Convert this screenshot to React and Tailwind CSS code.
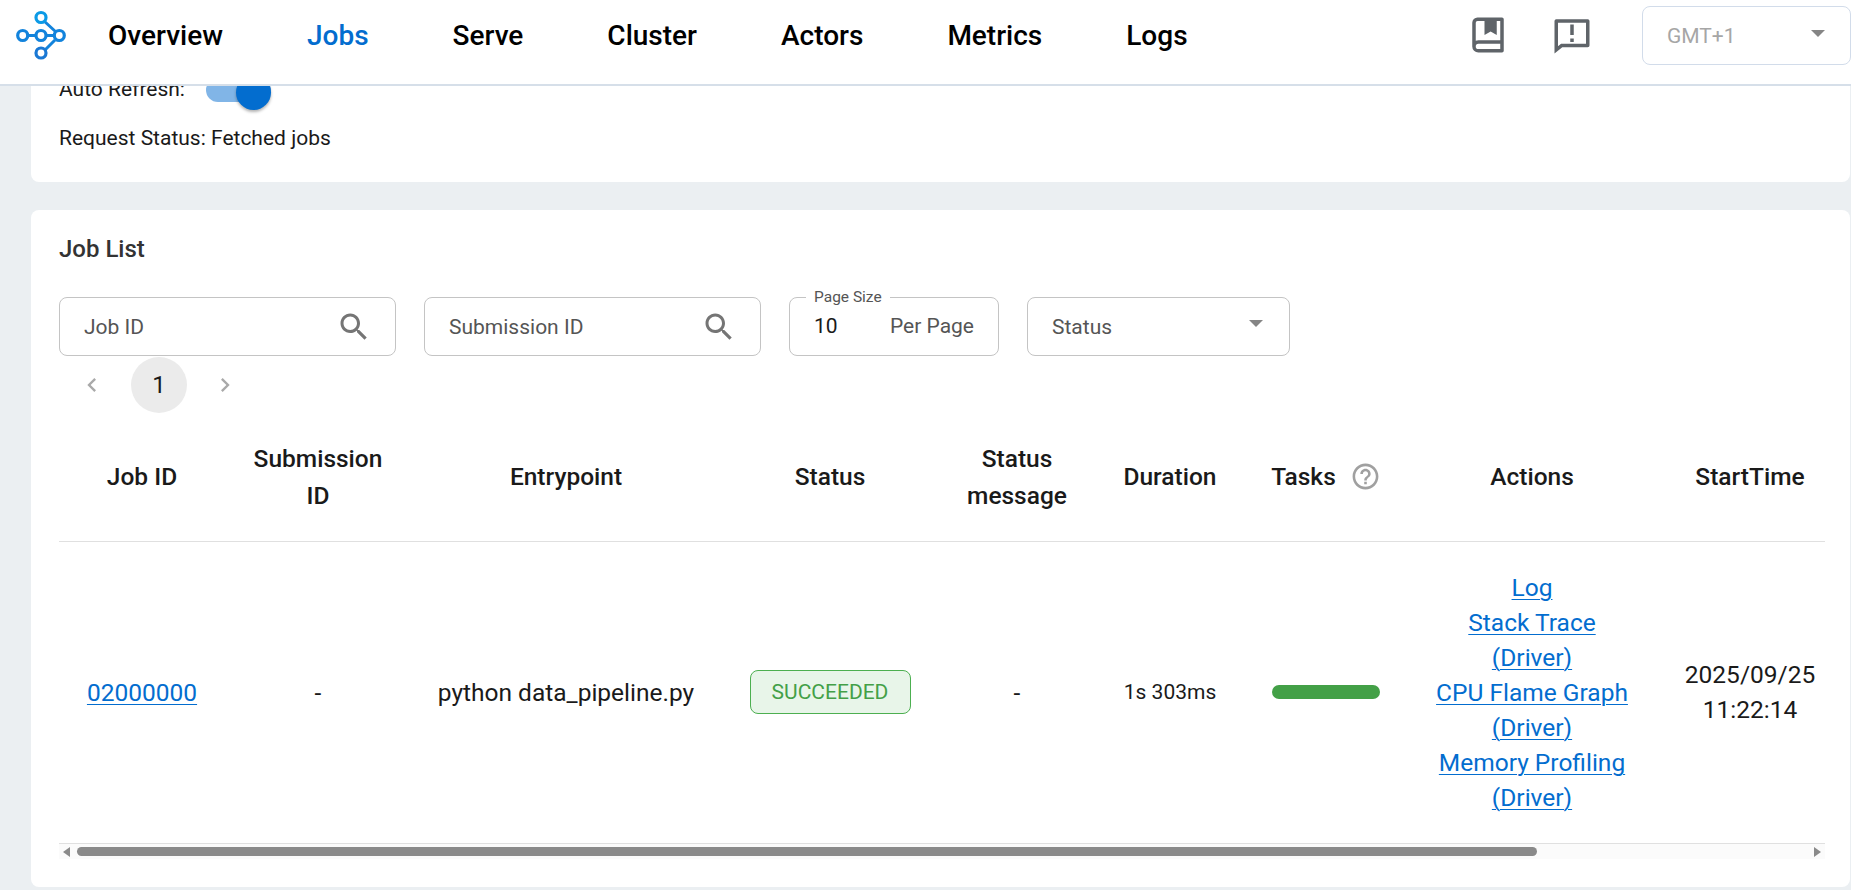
import React from "react";

const SEARCH = "M15.5 14h-.79l-.28-.27C15.41 12.59 16 11.11 16 9.5 16 5.91 13.09 3 9.5 3S3 5.91 3 9.5 5.91 16 9.5 16c1.61 0 3.09-.59 4.23-1.57l.27.28v.79l5 4.99L20.49 19l-4.99-5zm-6 0C7.01 14 5 11.99 5 9.5S7.01 5 9.5 5 14 7.01 14 9.5 11.99 14 9.5 14z";

function Logo() {
  return (
    <svg width="60" height="60" viewBox="0 0 60 60" fill="none" className="shrink-0">
      <path d="M17 30.5H45 M34 16L46 27 M45 35L35 45" stroke="#1283dc" strokeWidth="3" />
      <g stroke="#1283dc" strokeWidth="3.2" fill="#fff">
        <circle cx="31" cy="12.5" r="5" stroke="#0b9ae6" />
        <circle cx="12.7" cy="30.5" r="5" />
        <circle cx="31" cy="30.5" r="5" />
        <circle cx="49.3" cy="30.5" r="5" />
        <circle cx="31" cy="48" r="5" stroke="#1a78d4" />
      </g>
    </svg>
  );
}

function SearchIcon() {
  return (
    <svg viewBox="0 0 24 24" className="w-9 h-9 shrink-0 fill-[#757575]">
      <path d={SEARCH} />
    </svg>
  );
}

function SearchBox({ label, width }) {
  return (
    <div className={`flex items-center h-[59px] border border-[#c4c4c4] rounded-[8px] pl-[24px] pr-[23px] ${width}`}>
      <input
        placeholder={label}
        className="min-w-0 flex-1 pt-[2px] outline-none text-[21px] text-[#333] placeholder:text-[#555]"
      />
      <SearchIcon />
    </div>
  );
}

function Arrow({ color }) {
  return <div className={`w-0 h-0 border-l-[7px] border-r-[7px] border-t-[7px] border-l-transparent border-r-transparent ${color}`} />;
}

function A({ children }) {
  return <a href="#" className="text-[#036dcf] underline decoration-[1px] underline-offset-[3px]">{children}</a>;
}

const cols = [
  ["w-[166px]", "Job ID"],
  ["w-[186px]", "Submission ID"],
  ["w-[310px]", "Entrypoint"],
  ["w-[218px]", "Status"],
  ["w-[156px]", "Status message"],
  ["w-[150px]", "Duration"],
  ["w-[162px]", "Tasks"],
  ["w-[250px]", "Actions"],
  ["w-[186px]", "StartTime"],
];

export default function App() {
  return (
    <div className="relative h-[890px] overflow-hidden bg-[#ebeff2] font-['Roboto',sans-serif] text-[#1a1a1a]">
      <header className="absolute top-0 left-0 right-0 z-10 h-[86px] bg-white border-b-2 border-[#d6dfe9]">
        <div className="h-[70px] flex items-center">
          <div className="ml-[10px] w-[98px]"><Logo /></div>
          <nav className="flex gap-[84px] pt-[2px] text-[28px] font-medium text-black">
            <span>Overview</span>
            <span className="text-[#036dcf]">Jobs</span>
            <span>Serve</span>
            <span>Cluster</span>
            <span>Actors</span>
            <span>Metrics</span>
            <span>Logs</span>
          </nav>
          <div className="ml-auto flex items-center">
            <svg viewBox="0 0 24 24" className="w-[42px] h-[42px] fill-[#5f6469]"><path d="M3 18.5V5a3 3 0 0 1 3-3h14a1 1 0 0 1 1 1v18a1 1 0 0 1-1 1H6.5A3.5 3.5 0 0 1 3 18.5zM19 20v-3H6.5a1.5 1.5 0 0 0 0 3H19zM10 4H6a1 1 0 0 0-1 1v10.337A3.486 3.486 0 0 1 6.5 15H19V4h-2v8l-3.5-2-3.5 2V4z" /></svg>
            <svg viewBox="0 0 24 24" className="w-[42px] h-[42px] fill-[#5f6469] ml-[42px]"><path d="M6.455 19L2 22.5V4a1 1 0 0 1 1-1h18a1 1 0 0 1 1 1v14a1 1 0 0 1-1 1H6.455zm-.692-2H20V5H4v13.385L5.763 17zM11 14h2v2h-2v-2zm0-8h2v6h-2V6z" /></svg>
            <div className="ml-[49px] w-[209px] h-[59px] border border-[#d2dcea] rounded-[8px] flex items-center justify-between pl-[24px] pr-[25px] text-[21px] text-[#a6a6a6]">
              <span className="pt-[3px]">GMT+1</span>
              <Arrow color="border-t-[#858585] -translate-y-[2px]" />
            </div>
          </div>
        </div>
      </header>

      <main className="pl-[31px] pr-[1px] pt-[60px] flex flex-col gap-[28px]">
        <section className="bg-white rounded-[8px] h-[122px] pl-[28px] pt-[14px]">
          <div className="flex items-center h-[32px] text-[21px]">
            <span>Auto Refresh:</span>
            <div className="ml-[21px] w-[65px] h-[24px] rounded-full bg-[#81b5e7] flex items-center justify-end">
              <div className="w-[35px] h-[35px] rounded-full bg-[#036dcf] shadow-[0_2px_3px_rgba(0,0,0,0.3)] shrink-0 translate-y-[2px]" />
            </div>
          </div>
          <p className="mt-[18px] text-[21px] leading-[28px]">Request Status: Fetched jobs</p>
        </section>

        <section className="bg-white rounded-[8px] h-[677px] pl-[28px] pr-[25px] pt-[25px]">
          <h2 className="text-[24px] font-medium leading-[28px] text-[#333]">Job List</h2>

          <div className="mt-[34px] flex gap-[28px]">
            <SearchBox label="Job ID" width="w-[337px]" />
            <SearchBox label="Submission ID" width="w-[337px]" />
            <div className="relative w-[210px] h-[59px] border border-[#c4c4c4] rounded-[8px] flex items-center justify-between pl-[24px] pr-[24px] text-[21px]">
              <span className="absolute left-[16px] -top-[9px] bg-white px-[8px] text-[15.5px] leading-[16px] text-[#555]">Page Size</span>
              <span className="pt-[1px] text-[#1a1a1a]">10</span>
              <span className="text-[#555]">Per Page</span>
            </div>
            <div className="w-[263px] h-[59px] border border-[#c4c4c4] rounded-[8px] flex items-center justify-between pl-[24px] pr-[26px] text-[21px] text-[#555]">
              <span className="pt-[2px]">Status</span>
              <Arrow color="border-t-[#858585] -translate-y-[3px]" />
            </div>
          </div>

          <div className="flex items-center h-[56px] mt-[1px]">
            <svg viewBox="0 0 24 24" className="ml-[19px] w-7 h-7 fill-[#a9a9a9]"><path d="M15.41 7.41 14 6l-6 6 6 6 1.41-1.41L10.83 12z" /></svg>
            <div className="ml-[25px] w-[56px] h-[56px] rounded-full bg-[#ebebeb] flex items-center justify-center text-[24px]">1</div>
            <svg viewBox="0 0 24 24" className="ml-[24px] w-7 h-7 fill-[#a9a9a9]"><path d="M10 6 8.59 7.41 13.17 12l-4.58 4.59L10 18l6-6z" /></svg>
          </div>

          <div className="overflow-hidden">
            <table className="table-fixed w-[1784px] border-collapse text-center">
              <colgroup>
                {cols.map(([w, n]) => <col key={n} className={w} />)}
              </colgroup>
              <thead>
                <tr className="h-[128px] border-b border-[#e0e0e0]">
                  {cols.map(([w, n]) => (
                    <th key={n} className="font-medium text-[24.5px] leading-[37px] px-[20px]">
                      {n === "Tasks" ? (
                        <span className="flex items-center justify-center gap-[14px] whitespace-nowrap">
                          Tasks
                          <svg viewBox="0 0 24 24" className="w-[31px] h-[31px] fill-[#a0a0a0]"><path d="M11 18h2v-2h-2v2zm1-16C6.48 2 2 6.48 2 12s4.48 10 10 10 10-4.48 10-10S17.52 2 12 2zm0 18c-4.41 0-8-3.59-8-8s3.59-8 8-8 8 3.59 8 8-3.59 8-8 8zm0-14c-2.21 0-4 1.79-4 4h2c0-1.1.9-2 2-2s2 .9 2 2c0 2-3 1.75-3 5h2c0-2.25 3-2.5 3-5 0-2.21-1.79-4-4-4z" /></svg>
                        </span>
                      ) : n}
                    </th>
                  ))}
                </tr>
              </thead>
              <tbody>
                <tr className="h-[302px] text-[24.5px] leading-[35px]">
                  <td><A>02000000</A></td>
                  <td>-</td>
                  <td className="whitespace-nowrap">python data_pipeline.py</td>
                  <td>
                    <span className="inline-block w-[161px] h-[44px] leading-[42px] border border-[#4caf50] bg-[#e8f5e9] rounded-[8px] text-[#43a047] text-[21px]">SUCCEEDED</span>
                  </td>
                  <td>-</td>
                  <td className="text-[21px]">1s 303ms</td>
                  <td><div className="mx-auto w-[108px] h-[14px] rounded-full bg-[#43a047]" /></td>
                  <td className="px-[20px]">
                    <div><A>Log</A></div>
                    <div><A>Stack Trace</A></div>
                    <div><A>(Driver)</A></div>
                    <div><A>CPU Flame Graph</A></div>
                    <div><A>(Driver)</A></div>
                    <div><A>Memory Profiling</A></div>
                    <div><A>(Driver)</A></div>
                  </td>
                  <td>2025/09/25<br />11:22:14</td>
                </tr>
              </tbody>
            </table>
          </div>

          <div className="relative h-[16px] border-t border-[#e0e0e0] bg-[#fbfbfb] flex items-center justify-between px-[4px]">
            <div className="w-0 h-0 border-y-[5px] border-r-[7px] border-y-transparent border-r-[#8a8a8a]" />
            <div className="absolute left-[18px] top-[3px] w-[1460px] h-[9px] rounded-full bg-[#8a8a8a]" />
            <div className="w-0 h-0 border-y-[5px] border-l-[7px] border-y-transparent border-l-[#8a8a8a]" />
          </div>
        </section>
      </main>
    </div>
  );
}
